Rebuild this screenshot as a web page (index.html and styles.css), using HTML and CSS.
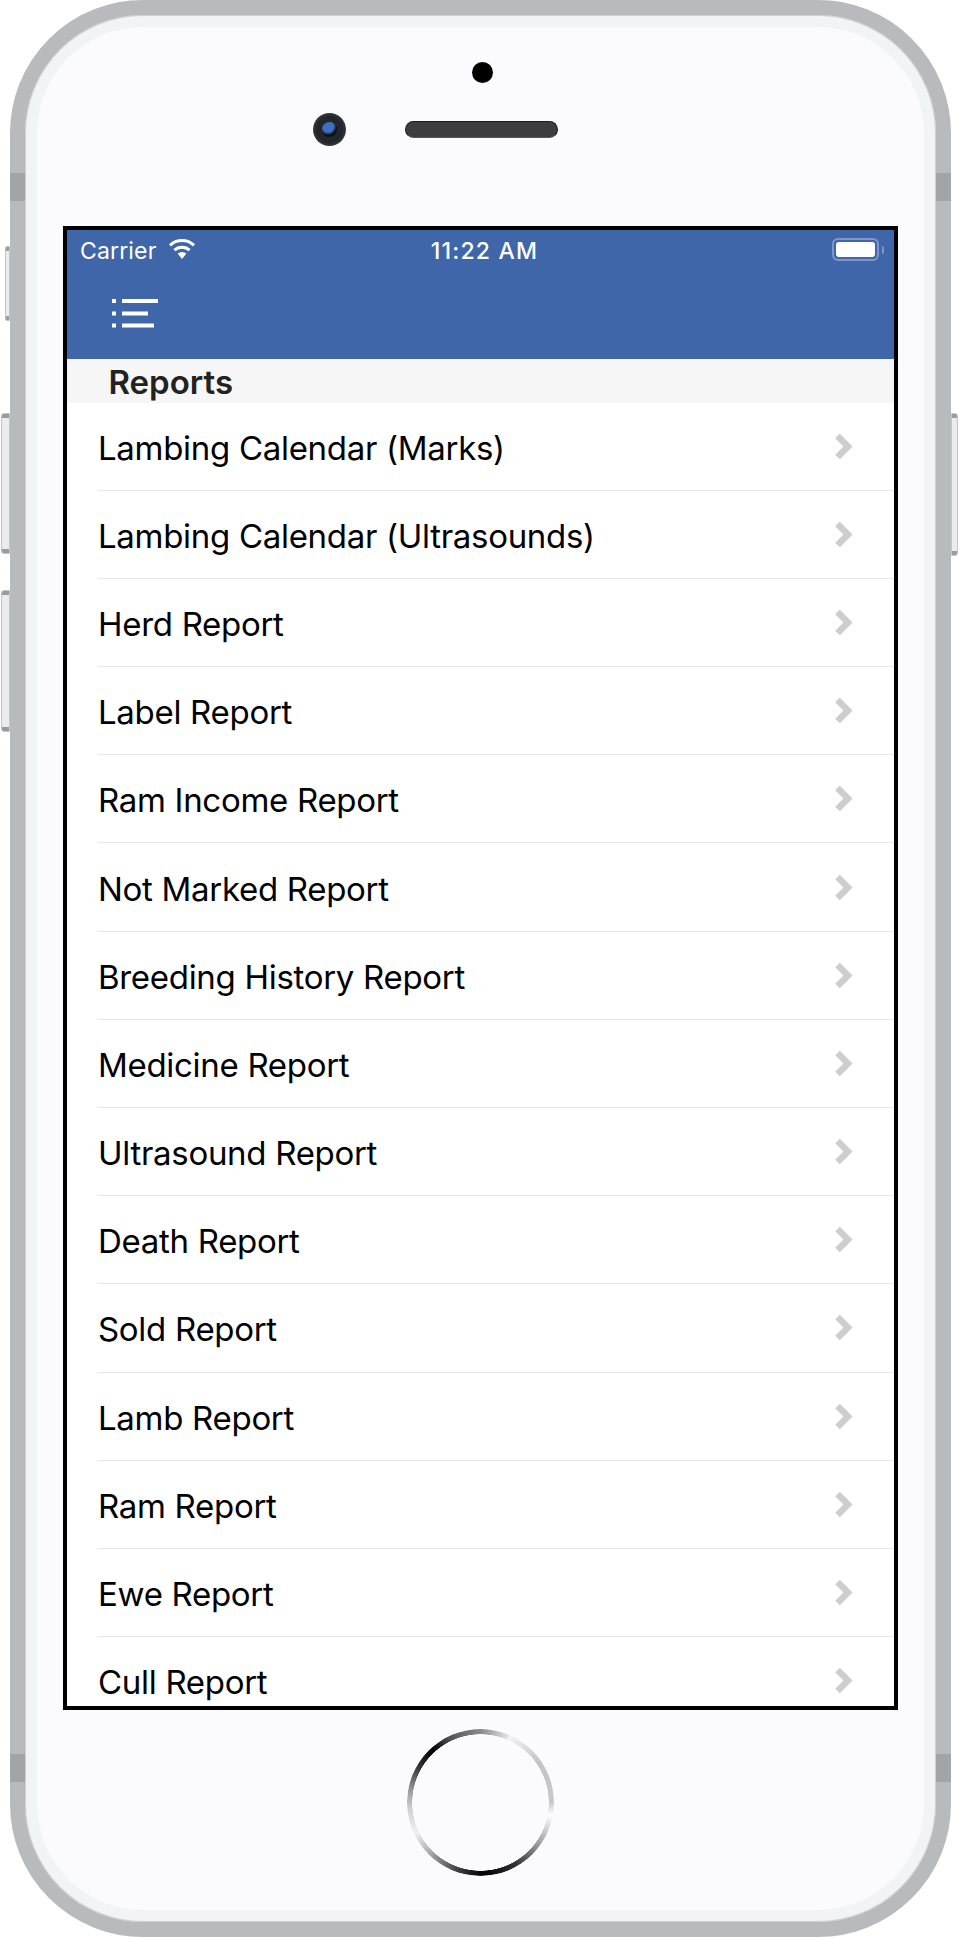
FILE: index.html
```html
<!DOCTYPE html>
<html lang="en">
<head>
<meta charset="utf-8">
<title>Reports</title>
<link rel="stylesheet" href="styles.css">
</head>
<body>
<div class="device">
  <span class="side side-mute"></span>
  <span class="side side-vol-up"></span>
  <span class="side side-vol-down"></span>
  <span class="side side-power"></span>
  <span class="band band-tl"></span>
  <span class="band band-tr"></span>
  <span class="band band-bl"></span>
  <span class="band band-br"></span>
  <div class="shell">
    <div class="face">
      <div class="sensors">
        <span class="dot"></span>
        <div class="sensor-row">
          <span class="camera"><span class="lens"></span></span>
          <span class="speaker"></span>
        </div>
      </div>
      <main class="screen">
        <header class="appbar">
          <div class="status">
            <div class="status-left">
              <span class="carrier">Carrier</span>
              <svg class="wifi" viewBox="0 0 28 20" aria-hidden="true">
                <path d="M14 20 9.600 14.600a6.600 6.600 0 0 1 8.800 0Z" fill="#fff"/>
                <path d="M6.400 11.200a11 11 0 0 1 15.200 0" fill="none" stroke="#fff" stroke-width="3"/>
                <path d="M2 6.400a17.400 17.400 0 0 1 24 0" fill="none" stroke="#fff" stroke-width="3"/>
              </svg>
            </div>
            <span class="time">11:22 AM</span>
            <div class="battery"><span class="battery-body"><span class="battery-fill"></span></span><span class="battery-nub"></span></div>
          </div>
          <div class="toolbar">
            <svg class="menu" viewBox="0 0 46 29" aria-hidden="true">
              <path d="M0 0h4v4H0zM0 12.500h4v4H0zM0 24.500h4v4H0zM10 0h36v4H10zM10 12.500h26v4H10zM10 24.500h32v4H10z" fill="#fff"/>
            </svg>
          </div>
        </header>
        <h1 class="section">Reports</h1>
        <ul class="list">
          <li class="row"><span class="label">Lambing Calendar (Marks)</span><svg class="chev" viewBox="0 0 18 27"><path d="M2.500 3 13 13.500 2.500 24"/></svg></li>
          <li class="row"><span class="label">Lambing Calendar (Ultrasounds)</span><svg class="chev" viewBox="0 0 18 27"><path d="M2.500 3 13 13.500 2.500 24"/></svg></li>
          <li class="row"><span class="label">Herd Report</span><svg class="chev" viewBox="0 0 18 27"><path d="M2.500 3 13 13.500 2.500 24"/></svg></li>
          <li class="row"><span class="label">Label Report</span><svg class="chev" viewBox="0 0 18 27"><path d="M2.500 3 13 13.500 2.500 24"/></svg></li>
          <li class="row"><span class="label">Ram Income Report</span><svg class="chev" viewBox="0 0 18 27"><path d="M2.500 3 13 13.500 2.500 24"/></svg></li>
          <li class="row"><span class="label">Not Marked Report</span><svg class="chev" viewBox="0 0 18 27"><path d="M2.500 3 13 13.500 2.500 24"/></svg></li>
          <li class="row"><span class="label">Breeding History Report</span><svg class="chev" viewBox="0 0 18 27"><path d="M2.500 3 13 13.500 2.500 24"/></svg></li>
          <li class="row"><span class="label">Medicine Report</span><svg class="chev" viewBox="0 0 18 27"><path d="M2.500 3 13 13.500 2.500 24"/></svg></li>
          <li class="row"><span class="label">Ultrasound Report</span><svg class="chev" viewBox="0 0 18 27"><path d="M2.500 3 13 13.500 2.500 24"/></svg></li>
          <li class="row"><span class="label">Death Report</span><svg class="chev" viewBox="0 0 18 27"><path d="M2.500 3 13 13.500 2.500 24"/></svg></li>
          <li class="row"><span class="label">Sold Report</span><svg class="chev" viewBox="0 0 18 27"><path d="M2.500 3 13 13.500 2.500 24"/></svg></li>
          <li class="row"><span class="label">Lamb Report</span><svg class="chev" viewBox="0 0 18 27"><path d="M2.500 3 13 13.500 2.500 24"/></svg></li>
          <li class="row"><span class="label">Ram Report</span><svg class="chev" viewBox="0 0 18 27"><path d="M2.500 3 13 13.500 2.500 24"/></svg></li>
          <li class="row"><span class="label">Ewe Report</span><svg class="chev" viewBox="0 0 18 27"><path d="M2.500 3 13 13.500 2.500 24"/></svg></li>
          <li class="row"><span class="label">Cull Report</span><svg class="chev" viewBox="0 0 18 27"><path d="M2.500 3 13 13.500 2.500 24"/></svg></li>
        </ul>
      </main>
      <div class="home-area"><span class="home"></span></div>
    </div>
  </div>
</div>
</body>
</html>
```

FILE: styles.css
```css
* { box-sizing: border-box; }
html, body { margin: 0; padding: 0; background: #fff; }
body { width: 960px; height: 1937px; overflow: hidden; font-family: Inter, "Liberation Sans", sans-serif; }

.device { position: relative; width: 960px; height: 1937px; }

.shell {
  position: absolute; left: 10px; top: 0; width: 941px; height: 1937px;
  border: 15px solid #b9babc; border-radius: 133px; background: #f2f3f5; overflow: hidden;
  box-shadow: inset 0 0 0 1px #cfd0d2;
}
.face {
  width: 887px; height: 1883px; margin: 12px;
  border-radius: 106px; background: #fbfbfd;
}

.side {
  position: absolute; display: block;
  border: 1px solid #c4c5c7;
  background: linear-gradient(#9a9b9d 0 4px, #ececee 4px calc(100% - 4px), #9a9b9d calc(100% - 4px));
}
.side-mute { left: 5px; top: 246px; width: 5px; height: 75px; border-radius: 2px 0 0 2px; }
.side-vol-up { left: 1px; top: 413px; width: 9px; height: 141px; border-radius: 3px 0 0 3px; }
.side-vol-down { left: 1px; top: 590px; width: 9px; height: 142px; border-radius: 3px 0 0 3px; }
.side-power { left: 951px; top: 413px; width: 7px; height: 143px; border-radius: 0 3px 3px 0; }

.band { position: absolute; z-index: 2; display: block; width: 15px; height: 28px; background: #a3a4a6; }
.band-tl { left: 10px; top: 173px; }
.band-tr { left: 936px; top: 173px; }
.band-bl { left: 10px; top: 1754px; }
.band-br { left: 936px; top: 1754px; }

.sensors { height: 198.500px; padding-top: 35px; }
.dot { display: block; width: 21px; height: 21px; margin-left: 434.500px; border-radius: 50%; background: #000; }
.sensor-row { display: flex; align-items: center; margin-top: 30px; margin-left: 276px; }
.camera {
  display: flex; align-items: center; justify-content: center;
  width: 33px; height: 33px; border-radius: 50%;
  background: radial-gradient(circle, #23252a 0 55%, #3d3e42 75%, #2b2c2f 100%);
}
.lens {
  display: block; width: 15px; height: 15px; border-radius: 50%;
  background: radial-gradient(circle at 40% 30%, #3f6fc0 0 40%, #0b0f18 62%);
}
.speaker {
  display: block; width: 153px; height: 17px; margin-left: 59px; border-radius: 9px;
  background: #3d3d3f; border: 1px solid #1c1c1e; border-bottom-color: #55555a;
}

.screen {
  width: 835px; height: 1484.500px; margin-left: 26px;
  border: 4.500px solid #000; background: #fff; overflow: hidden;
}
.appbar { height: 129px; background: #3f66a9; color: #fff; }
.status {
  display: grid; grid-template-columns: 1fr auto 1fr; align-items: center;
  height: 42px; padding: 0 10px 0 13px;
}
.status-left { display: flex; align-items: center; gap: 12px; }
.carrier { font-size: 23px; font-weight: 400; line-height: 42px; letter-spacing: .15px; }
.wifi { display: block; width: 28px; height: 20px; margin-top: -4px; }
.time { margin-left: 5px; font-size: 23px; font-weight: 500; line-height: 42px; letter-spacing: 1.2px; }
.battery { display: flex; align-items: center; justify-content: flex-end; gap: 3px; margin-top: -2px; }
.battery-body {
  display: block; width: 47px; height: 23px; padding: 2px;
  border: 2px solid #7d98c6; border-radius: 6px;
}
.battery-fill { display: block; width: 100%; height: 100%; background: #fff; border-radius: 3px; }
.battery-nub { display: block; width: 2px; height: 8px; background: #7d98c6; border-radius: 0 2px 2px 0; }
.toolbar { padding: 27.500px 0 0 45px; }
.menu { display: block; width: 46px; height: 29px; }

.section {
  height: 44px; margin: 0; padding-left: 41.500px;
  background: #f6f6f6; color: #222;
  font-size: 33px; font-weight: 600; line-height: 46px;
}

.list { margin: 0; padding: 0; list-style: none; }
.row {
  display: flex; align-items: center; justify-content: space-between;
  height: 88.200px; margin-left: 31px; padding-right: 41px;
  border-bottom: 1.500px solid #e8e8ea;
  color: #000; font-size: 33px; font-weight: 370; letter-spacing: -.3px;
}
.label { padding-top: 3px; }
.chev { display: block; width: 18px; height: 27px; fill: none; stroke: #cdcdd0; stroke-width: 6.500px; }

.home-area { padding: 19px 0 0 370px; }
.home {
  display: block; width: 147px; height: 147px; border-radius: 50%;
  background: conic-gradient(#8a8a8a 0deg, #e0e0e0 22deg, #f4f4f4 24deg, #c4c4c4 55deg, #c8c8c8 90deg, #fff 100deg, #a0a0a0 125deg, #333 150deg, #000 178deg, #444 200deg, #aaa 225deg, #f0f0f0 245deg, #d0d0d0 265deg, #999 280deg, #333 300deg, #000 318deg, #555 335deg, #8a8a8a 360deg);
  -webkit-mask: radial-gradient(circle, transparent 68px, #000 68.500px);
  mask: radial-gradient(circle, transparent 68px, #000 68.500px);
}
```
